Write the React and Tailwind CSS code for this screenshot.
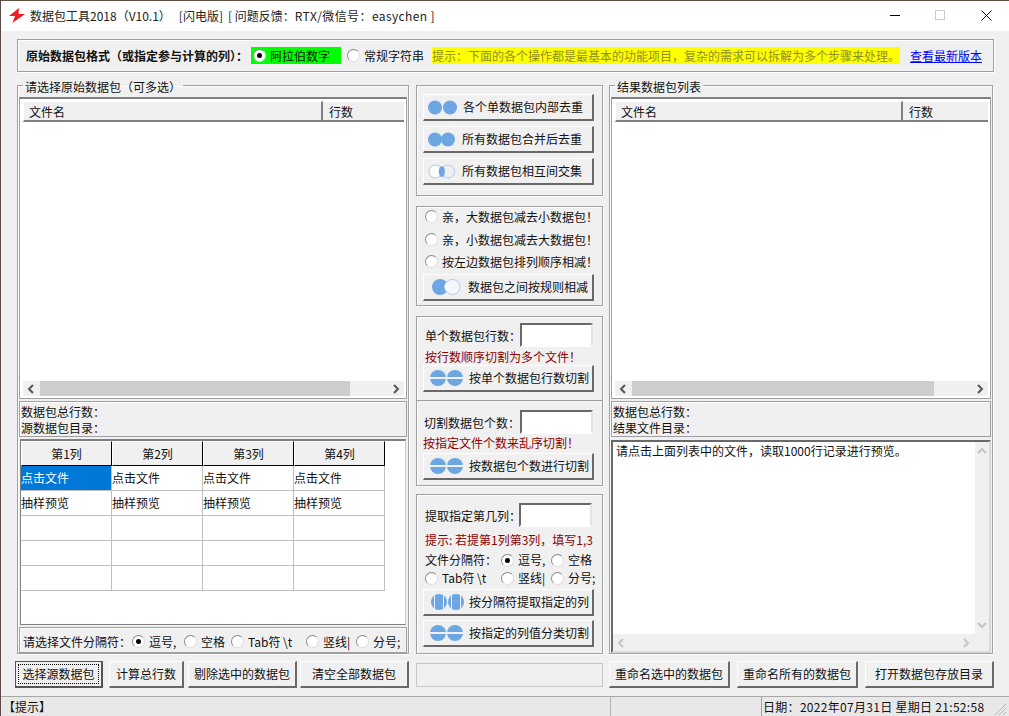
import React from 'react';

const raised = "border border-t-white border-l-white border-r-2 border-b-2 border-r-[#696969] border-b-[#696969] bg-[#f0f0f0]";
const groupBox = "border border-[#a0a0a0] shadow-[inset_1px_1px_0_#fff,1px_1px_0_#fff]";
const sunken = "border-2 border-t-[#696969] border-l-[#696969] border-r-[#e4e4e4] border-b-white bg-white";

const Radio = ({ checked }) => (
    <span className="w-[13px] h-[13px] shrink-0 rounded-full border border-[#8a8a8a] border-r-[#dcdcdc] border-b-[#dcdcdc] bg-white flex items-center justify-center">
        {checked && <span className="w-[5px] h-[5px] rounded-full bg-black"></span>}
    </span>
);

const RadioLabel = ({ checked, text, className = "" }) => (
    <span className={`flex items-center gap-[4px] whitespace-pre ${className}`}>
        <Radio checked={checked} />
        <span>{text}</span>
    </span>
);

const Circles = ({ type }) => {
    const blue = "#6ca6e3";
    const pale = "#a9cdf2";
    if (type === 'two') {
        return (
            <svg width="29" height="15" viewBox="0 0 29 15" className="shrink-0">
                <circle cx="7" cy="7.5" r="7" fill={blue} />
                <circle cx="22" cy="7.5" r="7" fill={blue} />
            </svg>
        );
    }
    if (type === 'merge') {
        return (
            <svg width="28" height="15" viewBox="0 0 28 15" className="shrink-0">
                <circle cx="7" cy="7.5" r="7" fill={blue} />
                <circle cx="20" cy="7.5" r="7" fill={blue} />
            </svg>
        );
    }
    if (type === 'cross') {
        return (
            <svg width="28" height="15" viewBox="0 0 28 15" className="shrink-0">
                <circle cx="7.5" cy="7.5" r="6.5" fill="#fff" stroke={pale} />
                <circle cx="20" cy="7.5" r="6.5" fill="none" stroke={pale} />
                <ellipse cx="13.8" cy="7.5" rx="3" ry="5.5" fill={blue} />
            </svg>
        );
    }
    if (type === 'minus') {
        return (
            <svg width="29" height="16" viewBox="0 0 29 16" className="shrink-0">
                <circle cx="8" cy="8" r="8" fill={blue} />
                <circle cx="20.5" cy="8" r="7.5" fill="#f4f8fd" stroke={pale} />
                <path d="M14.2 3.3a8 8 0 0 0 0 9.4a8 8 0 0 0 0-9.4z" fill="#fff" />
            </svg>
        );
    }
    if (type === 'split') {
        return (
            <svg width="33" height="16" viewBox="0 0 33 16" className="shrink-0">
                <circle cx="8" cy="8" r="8" fill={blue} />
                <circle cx="25" cy="8" r="8" fill={blue} />
                <rect x="0" y="7" width="33" height="2" fill="#f0f0f0" />
            </svg>
        );
    }
    return (
        <svg width="33" height="16" viewBox="0 0 33 16" className="shrink-0">
            <circle cx="8" cy="8" r="8" fill={blue} />
            <circle cx="25" cy="8" r="8" fill={blue} />
            <rect x="3" y="0" width="1" height="16" fill="#f0f0f0" />
            <rect x="12" y="0" width="1" height="16" fill="#f0f0f0" />
            <rect x="20" y="0" width="1" height="16" fill="#f0f0f0" />
            <rect x="29" y="0" width="1" height="16" fill="#f0f0f0" />
        </svg>
    );
};

const IconBtn = ({ type, text, className }) => (
    <button className={`${raised} w-[171px] h-[27px] shrink-0 flex items-center whitespace-pre text-[12px] leading-[14px] text-[#111] ${className}`}>
        <Circles type={type} />
        <span>{text}</span>
    </button>
);

const Chevron = ({ dir, light }) => {
    const paths = { left: "M7 2L3 6l4 4", right: "M4 2l4 4-4 4", up: "M2 8l4-4 4 4", down: "M2 4l4 4 4-4" };
    return (
        <svg width="12" height="12" viewBox="0 0 12 12" fill="none" stroke={light ? "#c4c4c4" : "#555"} strokeWidth="2">
            <path d={paths[dir]} />
        </svg>
    );
};

const FileList = ({ nameWidth, thumbWidth }) => (
    <div className="h-[302px] border border-[#a0a0a0] border-t-2 border-t-[#808080] bg-white pl-[3px] pr-[2px] pt-[2px] pb-[1px] flex flex-col">
        <div className="flex h-[21px] text-[12px] leading-[14px]">
            <div style={{ width: nameWidth }} className="border-t border-l border-t-white border-l-white border-r-2 border-b-2 border-r-[#808080] border-b-[#808080] bg-[#f0f0f0] pl-[5px] pt-[3px]">文件名</div>
            <div className="flex-1 border-t border-t-white border-b-2 border-b-[#808080] bg-[#f0f0f0] pl-[6px] pt-[3px]">行数</div>
        </div>
        <div className="flex-1"></div>
        <div className="h-[15px] mb-[1px] bg-[#f0f0f0] flex items-center">
            <span className="w-[17px] flex justify-center"><Chevron dir="left" /></span>
            <span style={{ width: thumbWidth }} className="h-full bg-[#cdcdcd]"></span>
            <span className="flex-1 flex justify-end pr-[2px]"><Chevron dir="right" /></span>
        </div>
    </div>
);

const InfoBox = ({ lines }) => (
    <div className="h-[36px] mt-[2px] border border-[#a0a0a0] shadow-[inset_1px_1px_0_#fff] pt-[2px] text-[12px] leading-[16px]">
        <div className="pl-[1px]">{lines[0]}</div>
        <div className="pl-[1px]">{lines[1]}</div>
    </div>
);

const DataGrid = () => {
    const cols = ['第1列', '第2列', '第3列', '第4列'];
    const rows = [['点击文件', '点击文件', '点击文件', '点击文件'], ['抽样预览', '抽样预览', '抽样预览', '抽样预览'], ['', '', '', ''], ['', '', '', ''], ['', '', '', '']];
    return (
        <div className="h-[186px] mt-[2px] ml-[1px] mr-[1px] border border-[#808080] border-t-2 border-r-[#c8c8c8] bg-white text-[12px] leading-[14px]">
            <div className="grid grid-cols-[repeat(4,91px)]">
                {cols.map((c) => (
                    <div key={c} className="h-[25px] bg-[#f0f0f0] border-t border-l border-t-white border-l-white border-r border-b border-r-black border-b-black flex items-center justify-center">{c}</div>
                ))}
                {rows.map((r, i) => r.map((t, j) => (
                    <div key={`${i}-${j}`} className={`h-[25px] border-r border-b border-[#bfbfbf] flex items-center ${i === 0 && j === 0 ? 'bg-[#0078d7] text-white' : ''}`}>{t}</div>
                )))}
            </div>
        </div>
    );
};

const WinButton = ({ children, className = "" }) => (
    <button className={`${raised} h-[27px] flex items-center justify-center text-[12px] leading-[14px] text-[#111] whitespace-pre ${className}`}>{children}</button>
);

const InputRow = ({ label, labelClass }) => (
    <div className="flex items-center h-[24px]">
        <span className={`whitespace-pre pt-[2px] ${labelClass}`}>{label}</span>
        <span className={`${sunken} w-[73px] h-[24px] shrink-0`}></span>
    </div>
);

export default function App() {
    return (
        <div className="w-[1009px] h-[716px] overflow-hidden bg-[#f0f0f0] text-[#111] text-[12px] leading-[14px] font-['Noto_Sans_CJK_SC','Liberation_Sans',sans-serif] flex flex-col border-l border-l-[#5b4a44]">
            {/* title bar */}
            <div className="h-[31px] shrink-0 bg-white border-t border-t-[#5d5040] flex items-center">
                <svg width="16" height="15" viewBox="0 0 16 15" className="ml-[8px] mr-[5px] -mt-[1px]">
                    <path d="M10 0L0 8h6L3.5 15 16 6H9.5z" fill="#ee1c25" />
                </svg>
                <span className="whitespace-pre text-[#222]">
                    数据包工具2018（V10.1）
                    <span className="ml-[8px]">[闪电版]</span>
                    <span className="ml-[5px]">[ 问题反馈：</span>
                    <span className="tracking-[0.4px]">RTX/微信号：easychen ]</span>
                </span>
                <div className="ml-auto -mt-[2px] flex items-center">
                    <span className="w-[10px] h-[1px] bg-black mr-[35px]"></span>
                    <span className="w-[10px] h-[10px] border border-[#cccccc] mr-[36px]"></span>
                    <svg width="11" height="11" viewBox="0 0 11 11" className="mr-[17px]" stroke="#111" strokeWidth="1">
                        <path d="M0.5 0.5l10 10M10.5 0.5l-10 10" />
                    </svg>
                </div>
            </div>

            <div className="flex-1 pl-[16px] pr-[15px] pt-[8px]">
                {/* format row */}
                <div className={`${groupBox} h-[33px] flex items-center pl-[8px]`}>
                    <span className="font-bold whitespace-pre w-[225px]">原始数据包格式（或指定参与计算的列）：</span>
                    <span className="w-[90px] h-[17px] bg-[#00ff00] flex items-center pl-[2px]">
                        <RadioLabel checked text="阿拉伯数字" className="gap-[3px]" />
                    </span>
                    <RadioLabel className="ml-[6px] w-[85px]" text="常规字符串" />
                    <span className="w-[468px] h-[17px] bg-[#ffff00] text-[#8f8f20] flex items-center whitespace-pre">提示：下面的各个操作都是最基本的功能项目，复杂的需求可以拆解为多个步骤来处理。</span>
                    <a className="ml-[10px] text-[#0000ff] underline whitespace-pre">查看最新版本</a>
                </div>

                {/* three columns */}
                <div className="flex mt-[4px] h-[578px]">
                    <fieldset className={`${groupBox} w-[392px] min-w-0 px-[1px] pt-[3px]`}>
                        <legend className="ml-[4px] px-[2px] pt-[4px] leading-[14px]">请选择原始数据包（可多选）</legend>
                        <FileList nameWidth="300px" thumbWidth="310px" />
                        <InfoBox lines={['数据包总行数：', '源数据包目录：']} />
                        <DataGrid />
                        <div className="h-[26px] mt-[2px] border border-[#a0a0a0] shadow-[inset_1px_1px_0_#fff] flex items-center pl-[3px] pt-[3px] whitespace-pre">
                            <span className="w-[109px]">请选择文件分隔符：</span>
                            <RadioLabel checked text="逗号," className="w-[52px]" />
                            <RadioLabel text="空格" className="w-[47px]" />
                            <RadioLabel text="Tab符 \t" className="w-[75px]" />
                            <RadioLabel text="竖线|" className="w-[50px]" />
                            <RadioLabel text="分号;" />
                        </div>
                    </fieldset>

                    <div className="w-[187px] ml-[7px] mt-[9px] flex flex-col">
                        <div className={`${groupBox} h-[111px] px-[6px] pt-[8px] flex flex-col gap-[5px]`}>
                            <IconBtn type="two" text="各个单数据包内部去重" className="pl-[4px] gap-[6px]" />
                            <IconBtn type="merge" text="所有数据包合并后去重" className="pl-[4px] gap-[6px]" />
                            <IconBtn type="cross" text="所有数据包相互间交集" className="pl-[4px] gap-[6px]" />
                        </div>
                        <div className={`${groupBox} h-[100px] mt-[10px] px-[6px] pt-[1px] flex flex-col`}>
                            <RadioLabel className="h-[17px] ml-[2px]" text="亲，大数据包减去小数据包！" />
                            <RadioLabel className="h-[17px] ml-[2px] mt-[6px]" text="亲，小数据包减去大数据包！" />
                            <RadioLabel className="h-[17px] ml-[2px] mt-[5px]" text="按左边数据包排列顺序相减！" />
                            <IconBtn type="minus" text="数据包之间按规则相减" className="mt-[4px] pl-[8px] gap-[7px]" />
                        </div>
                        <div className={`${groupBox} h-[170px] mt-[10px] flex flex-col`}>
                            <div className="h-[84px] px-[6px] border-b border-b-[#a0a0a0] pt-[6px]">
                                <InputRow label="单个数据包行数：" labelClass="pl-[2px] w-[97px]" />
                                <div className="text-[#8b0000] h-[16px] mt-[2px] pl-[2px] flex items-center whitespace-pre">按行数顺序切割为多个文件！</div>
                                <IconBtn type="split" text="按单个数据包行数切割" className="pl-[6px] gap-[6px]" />
                            </div>
                            <div className="px-[6px] pt-[9px]">
                                <InputRow label="切割数据包个数：" labelClass="pl-[1px] w-[97px]" />
                                <div className="text-[#8b0000] h-[16px] mt-[1px] flex items-center whitespace-pre">按指定文件个数来乱序切割！</div>
                                <IconBtn type="split" text="按数据包个数进行切割" className="mt-[2px] pl-[6px] gap-[6px]" />
                            </div>
                        </div>
                        <div className={`${groupBox} h-[160px] mt-[8px] px-[6px] pt-[8px] flex flex-col`}>
                            <InputRow label="提取指定第几列：" labelClass="pl-[2px] w-[96px]" />
                            <div className="text-[#8b0000] h-[18px] mt-[4px] pl-[2px] flex items-center whitespace-pre">提示: 若提第1列第3列，填写1,3</div>
                            <div className="flex items-center h-[18px] mt-[2px] pl-[2px] whitespace-pre">
                                <span className="w-[76px]">文件分隔符：</span>
                                <RadioLabel checked text="逗号," className="w-[50px]" />
                                <RadioLabel text="空格" />
                            </div>
                            <div className="flex items-center h-[18px] pl-[2px] whitespace-pre">
                                <RadioLabel text="Tab符 \t" className="w-[76px]" />
                                <RadioLabel text="竖线|" className="w-[50px]" />
                                <RadioLabel text="分号;" />
                            </div>
                            <div className="mt-[2px] flex flex-col gap-[4px]">
                                <IconBtn type="cols" text="按分隔符提取指定的列" className="pl-[7px] gap-[5px]" />
                                <IconBtn type="split" text="按指定的列值分类切割" className="pl-[6px] gap-[6px]" />
                            </div>
                        </div>
                    </div>

                    <fieldset className={`${groupBox} w-[384px] ml-[6px] min-w-0 px-[1px] pt-[3px]`}>
                        <legend className="ml-[4px] px-[2px] pt-[4px] leading-[14px]">结果数据包列表</legend>
                        <FileList nameWidth="288px" thumbWidth="302px" />
                        <InfoBox lines={['数据包总行数：', '结果文件目录：']} />
                        <div className="h-[213px] mt-[3px] border-2 border-t-[#696969] border-l-[#696969] border-r-[#d8d8d8] border-b-[#d8d8d8] bg-[#f0f0f0] flex flex-col">
                            <div className="flex-1 flex min-h-0">
                                <div className="flex-1 bg-white pl-[3px] pt-[2px] whitespace-pre">请点击上面列表中的文件，读取1000行记录进行预览。</div>
                                <div className="w-[14px] flex flex-col justify-between items-center py-[3px]">
                                    <Chevron dir="up" light />
                                    <Chevron dir="down" light />
                                </div>
                            </div>
                            <div className="h-[17px] flex items-center justify-between pl-[3px] pr-[17px]">
                                <Chevron dir="left" light />
                                <Chevron dir="right" light />
                            </div>
                        </div>
                    </fieldset>
                </div>

                {/* bottom buttons */}
                <div className="flex items-start mt-[7px] h-[27px]">
                    <button className="w-[88px] h-[27px] -ml-[2px] border border-[#555] border-r-2 border-b-2 bg-[#f0f0f0] p-[2px] flex">
                        <span className="flex-1 border border-dotted border-black flex items-center justify-center whitespace-pre">选择源数据包</span>
                    </button>
                    <WinButton className="w-[75px] ml-[6px]">计算总行数</WinButton>
                    <WinButton className="w-[109px] ml-[4px]">剔除选中的数据包</WinButton>
                    <WinButton className="w-[109px] ml-[3px]">清空全部数据包</WinButton>
                    <span className="w-[187px] h-[24px] mt-[2px] ml-[7px] border border-[#c8c8c8]"></span>
                    <WinButton className="w-[121px] ml-[6px]">重命名选中的数据包</WinButton>
                    <WinButton className="w-[121px] ml-[7px]">重命名所有的数据包</WinButton>
                    <WinButton className="w-[129px] ml-[7px]">打开数据包存放目录</WinButton>
                </div>
            </div>

            {/* status bar */}
            <div className="h-[20px] shrink-0 bg-[#e8e8e8] flex border-t border-t-[#a8a8a8] whitespace-pre">
                <div className="w-[609px] pl-[2px] flex items-center">【提示】</div>
                <div className="w-[148px] border-l border-l-[#b0b0b0]"></div>
                <div className="flex-1 ml-[3px] pl-[1px] border-l border-l-[#a0a0a0] flex items-center justify-between">
                    <span className="tracking-[0.3px]">日期：2022年07月31日 星期日 21:52:58</span>
                    <svg width="14" height="14" viewBox="0 0 14 14" stroke="#b4b4b4" strokeWidth="1" className="mt-[4px] mr-[2px]">
                        <path d="M13 2L2 13M13 6l-7 7M13 10l-3 3" />
                    </svg>
                </div>
            </div>
        </div>
    );
}
